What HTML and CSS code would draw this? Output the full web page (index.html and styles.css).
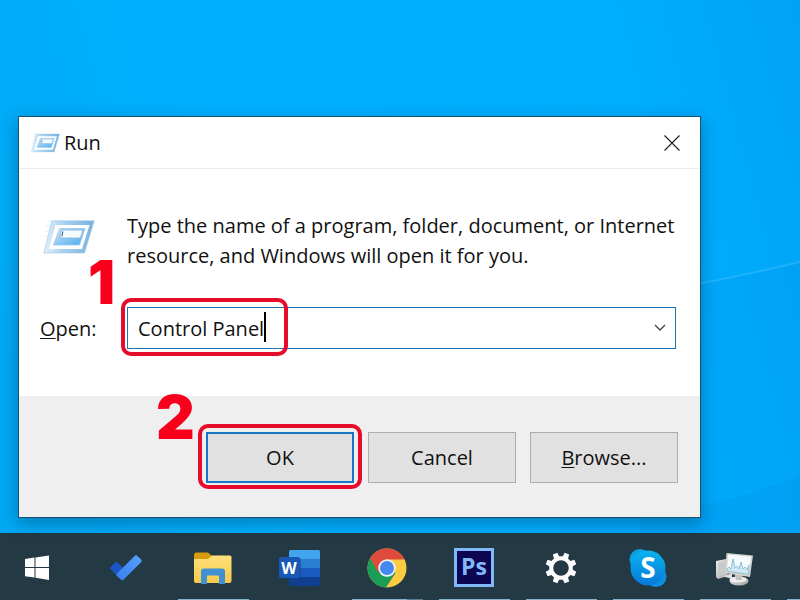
FILE: index.html
```html
<!DOCTYPE html>
<html lang="en">
<head>
<meta charset="utf-8">
<title>Run</title>
<link rel="stylesheet" href="styles.css">
</head>
<body>
<svg class="defs" aria-hidden="true">
  <defs>
    <linearGradient id="frame" x1="0" y1="0" x2="1" y2="0"><stop offset="0" stop-color="#e3f1fb"/><stop offset=".4" stop-color="#a5d1f0"/><stop offset="1" stop-color="#78b0de"/></linearGradient>
    <linearGradient id="pane" x1="0" y1="0" x2="1" y2="1"><stop offset="0" stop-color="#d4eafa"/><stop offset="1" stop-color="#4aa9ee"/></linearGradient>
    <linearGradient id="folder" x1="0" y1="0" x2="0" y2="1"><stop offset="0" stop-color="#ffe07a"/><stop offset="1" stop-color="#f8c94c"/></linearGradient>
    <linearGradient id="tick" x1="0" y1="1" x2="1" y2="0"><stop offset="0" stop-color="#3a7df0"/><stop offset="1" stop-color="#55a0fb"/></linearGradient>
    <linearGradient id="skype" x1="0" y1="0" x2="0" y2="1"><stop offset="0" stop-color="#08b4ef"/><stop offset="1" stop-color="#0878d8"/></linearGradient>
    <linearGradient id="metal" x1="0" y1="0" x2="1" y2="1"><stop offset="0" stop-color="#f1f1f1"/><stop offset="1" stop-color="#9d9d9d"/></linearGradient>
    <symbol id="run" viewBox="0 0 52 34">
      <path d="M4 1.500H12M3 6H9M2 11H7M1 16H6" stroke="#e0effa"/>
      <path d="M9 .8H51.200L41.500 33H.8Z" fill="url(#frame)" stroke="#9cc4e4" stroke-width=".6"/>
      <path d="M12.500 5H46.500L39 29H6Z" fill="#fff"/>
      <path d="M16.500 8.500H42L36.500 25H10.500Z" fill="url(#pane)" stroke="#9cc8ea" stroke-width=".8"/>
      <path d="M18.500 10H40L37.500 18H16.500Z" fill="#f4fafe" stroke="#7db0d8" stroke-width=".8"/>
      <path d="M20 11.500L18.800 16.500" stroke="#305a7c"/>
    </symbol>
  </defs>
</svg>
<div class="screen">
  <main class="desktop">
    <svg class="wallpaper" viewBox="0 0 800 533" preserveAspectRatio="none" aria-hidden="true">
      <path d="M560 305Q700 285 800 262V533H560Z" fill="#0090e8" opacity=".18"/>
      <path d="M560 308Q700 286 800 262" fill="none" stroke="#3cc0ff" stroke-width="2" opacity=".5"/>
      <path d="M640 520Q740 500 800 476V533H640Z" fill="#0080d8" opacity=".15"/>
    </svg>
    <section class="dialog" role="dialog" aria-labelledby="title">
      <header class="titlebar">
        <svg class="title-icon"><use href="#run"/></svg>
        <h1 id="title">Run</h1>
        <button class="close" aria-label="Close"><svg viewBox="0 0 16 16"><path d="M.5 .5L15.500 15.500M15.500 .5L.5 15.500" stroke="#222" stroke-width="1.200"/></svg></button>
      </header>
      <form class="form">
        <div class="content">
          <svg class="run-icon"><use href="#run"/></svg>
          <p>Type the name of a program, folder, document, or Internet resource, and Windows will open it for you.</p>
          <label for="open"><u>O</u>pen:</label>
          <div class="combo">
            <input id="open" type="text" value="Control Panel" autocomplete="off" spellcheck="false">
            <button class="drop" type="button" aria-label="Show history"><svg viewBox="0 0 12 8"><path d="M1 1L6 6L11 1" fill="none" stroke="#444" stroke-width="1.400"/></svg></button>
            <span class="caret"></span>
            <span class="mark mark-field"></span>
            <span class="step step-one">1</span>
          </div>
        </div>
        <footer class="actions">
          <div class="default">
            <button class="btn btn-default" type="button">OK</button>
            <span class="mark mark-button"></span>
            <span class="step step-two">2</span>
          </div>
          <button class="btn" type="button">Cancel</button>
          <button class="btn" type="button"><span><u>B</u>rowse...</span></button>
        </footer>
      </form>
    </section>
  </main>
  <nav class="taskbar" aria-label="Taskbar">
    <button class="task" aria-label="Start"><svg viewBox="0 0 40 40"><path d="M6 11L15.500 9.600V19H6ZM16.500 9.400L30 7.500V19H16.500ZM6 20H15.500V29.500L6 28.200ZM16.500 20H30V32L16.500 29.700Z" fill="#fff"/></svg></button>
    <button class="task" aria-label="To Do"><svg viewBox="0 0 40 40"><path d="M4.300 19.500L9.500 14.300Q10.500 13.400 11.500 14.300L19 21.800L12 28.500L4.300 21Q3.500 20.200 4.300 19.500Z" fill="#1b57c4"/><path d="M10.500 26L28.800 7.700Q30 6.600 31.200 7.700L35.300 11.800Q36.300 13 35.300 14L17.200 32.100Q16.300 33 15.300 32.100L10.500 27.500Q9.800 26.700 10.500 26Z" fill="url(#tick)"/></svg></button>
    <button class="task open" aria-label="File Explorer"><svg viewBox="0 0 40 40"><path d="M1 7Q1 4.500 3 4.500H15L19 8L16 12H1Z" fill="#d99a0b"/><path d="M1 11H15L19 7.500H37Q38.500 7.500 38.500 9V33Q38.500 35 36.500 35H3Q1 35 1 33Z" fill="url(#folder)"/><path d="M8 36V23.500Q8 20.500 11 20.500H29Q32 20.500 32 23.500V36H26V28.500Q26 27.500 25 27.500H15Q14 27.500 14 28.500V36Z" fill="#3f91d2"/></svg></button>
    <button class="task" aria-label="Word"><svg class="wide" viewBox="0 0 42 40"><path d="M10 3.500Q10 2 11.500 2H39.500Q41 2 41 3.500V11H10Z" fill="#41a5ee"/><path d="M10 11H41V20H10Z" fill="#2b7cd3"/><path d="M10 20H41V29H10Z" fill="#185abd"/><path d="M10 29H41V36.500Q41 38 39.500 38H11.500Q10 38 10 36.500Z" fill="#103f91"/><rect x="1" y="10" width="21" height="21" rx="2" fill="#123f85" opacity=".5"/><rect x="0" y="9" width="21" height="21" rx="2" fill="#1957b5"/><text class="word-letter" x="10" y="26" text-anchor="middle">W</text></svg></button>
    <button class="task open stacked" aria-label="Chrome"><svg viewBox="0 0 40 40"><circle cx="20" cy="20" r="19.500" fill="#fdcb41"/><path d="M20 20L3.100 10.300A19.500 19.500 0 0 0 19 39.500L28.500 25Z" fill="#1b9d58"/><path d="M3.100 10.300A19.500 19.500 0 0 1 37.500 11.500H20L11.500 24.700Z" fill="#de4b3c"/><circle cx="20" cy="20" r="8.700" fill="#f2f2f2"/><circle cx="20" cy="20" r="7" fill="#4688f1"/></svg></button>
    <button class="task open" aria-label="Photoshop"><svg viewBox="0 0 40 40"><rect x="1.500" y="1.500" width="37" height="36" fill="#0c0750" stroke="#80b8fa" stroke-width="3"/><text class="ps-letters" x="20" y="27" text-anchor="middle">Ps</text></svg></button>
    <button class="task open" aria-label="Settings"><svg viewBox="0 0 40 40"><g fill="#fff" transform="translate(20 20)"><path d="M-3 -10.500L-2.400 -15.500H2.400L3 -10.500ZM-3 10.500L-2.400 15.500H2.400L3 10.500Z" transform="rotate(22.500)"/><path d="M-3 -10.500L-2.400 -15.500H2.400L3 -10.500ZM-3 10.500L-2.400 15.500H2.400L3 10.500Z" transform="rotate(67.500)"/><path d="M-3 -10.500L-2.400 -15.500H2.400L3 -10.500ZM-3 10.500L-2.400 15.500H2.400L3 10.500Z" transform="rotate(112.500)"/><path d="M-3 -10.500L-2.400 -15.500H2.400L3 -10.500ZM-3 10.500L-2.400 15.500H2.400L3 10.500Z" transform="rotate(157.500)"/><circle r="9.800" fill="none" stroke="#fff" stroke-width="4"/></g></svg></button>
    <button class="task open" aria-label="Skype"><svg viewBox="0 0 40 40"><circle cx="12" cy="11.500" r="10.500" fill="#0b9fe3"/><circle cx="28" cy="28.500" r="10.500" fill="#0a91df"/><circle cx="20" cy="20" r="17.500" fill="url(#skype)"/><text class="skype-letter" x="20" y="30" text-anchor="middle">S</text></svg></button>
    <button class="task open" aria-label="Resource Monitor"><svg viewBox="0 0 40 40"><path d="M1 13L11 11L13 28L3 31L1 29Z" fill="url(#metal)"/><path d="M3 15L10 14L12 26L4 28Z" fill="#c9c9c9"/><path d="M12 27L17 25V31L7 28Z" fill="#ddd"/><ellipse cx="24" cy="33" rx="9.500" ry="4.500" fill="url(#metal)"/><ellipse cx="23" cy="31.500" rx="8.500" ry="3" fill="#eee"/><path d="M19 24H28L27 32H21Z" fill="#c4c4c4"/><path d="M11.500 5L38 7.500L35 29L10 25Z" fill="#d7d3cc"/><path d="M13 6.500L36 8.700L33.500 26.500L12 23Z" fill="#f5fafc"/><path d="M12 21L14 19L16 21L18 11L20 20L22 18L24 21L26 14L28 21L30 19L32 22L34 17L33.500 26.500L12 23Z" fill="#cfe8f2" stroke="#86bcd5" stroke-width=".9"/></svg></button>
    <button class="task open" aria-label="More windows"></button>
  </nav>
</div>
</body>
</html>
```
FILE: styles.css
```css
* { box-sizing: border-box; }
body {
  margin: 0;
  font-family: "Open Sans", "Noto Sans", sans-serif;
  font-size: 20px;
  color: #111;
}
button, input { font: inherit; color: inherit; }
button { padding: 0; border: 0; background: none; }
svg { display: block; }
u { text-underline-offset: 2px; text-decoration-thickness: 1px; }
.defs { position: absolute; width: 0; height: 0; }
.screen {
  display: flex;
  flex-direction: column;
  min-height: 100vh;
  overflow: hidden;
  background: linear-gradient(75deg, #00a8f2 0%, #00b0ff 35%, #00aefe 80%, #00a2f6 100%);
}
.desktop {
  position: relative;
  flex: 1;
  display: flex;
  flex-direction: column;
  justify-content: flex-end;
  padding: 0 99px 15px 18px;
}
.wallpaper {
  position: absolute;
  inset: 0;
  width: 100%;
  height: 100%;
}
.dialog {
  position: relative;
  border: 1px solid #17526f;
  background: #fff;
  box-shadow: 0 5px 16px rgba(0, 45, 80, .4);
}
.titlebar {
  display: flex;
  align-items: center;
  gap: 4px;
  height: 52px;
  padding: 0 20px 0 12px;
  border-bottom: 1px solid #ececec;
}
.title-icon { width: 29px; height: 20px; }
h1 { flex: 1; margin: 0; font-size: 20px; font-weight: 400; }
.close svg { width: 16px; height: 16px; }
.content {
  display: grid;
  grid-template-columns: 87px 1fr;
  row-gap: 36px;
  align-items: center;
  padding: 42px 24px 47px 21px;
}
.run-icon { width: 52px; height: 34px; margin: 0 3px 8px; }
p { margin: 0; line-height: 30px; }
.combo {
  position: relative;
  display: flex;
  height: 42px;
  border: 1px solid #1e74ad;
}
.combo input {
  flex: 1;
  min-width: 0;
  padding: 0 10px;
  border: 0;
  outline: 0;
  background: none;
}
.drop { display: grid; place-items: center; width: 30px; }
.drop svg { width: 12px; height: 8px; }
.caret {
  position: absolute;
  left: 136px;
  top: 4px;
  width: 2px;
  height: 30px;
  background: #000;
}
.mark {
  position: absolute;
  border: 4px solid #e60c2b;
  border-radius: 10px;
  pointer-events: none;
}
.mark-field { left: -7px; top: -10px; width: 167px; height: 58px; }
.mark-button { inset: -8px -8px -6px; }
.step {
  position: absolute;
  font-family: Inter, sans-serif;
  font-size: 60px;
  font-weight: 900;
  line-height: 60px;
  color: #f8001c;
}
.step-one { left: -40px; top: -56px; }
.step-two { left: -50px; top: -45px; }
.actions {
  display: flex;
  justify-content: flex-end;
  gap: 14px;
  padding: 36px 22px 34px;
  background: #efefef;
}
.default { position: relative; display: flex; }
.btn {
  width: 148px;
  height: 51px;
  border: 1px solid #adadad;
  background: #e1e1e1;
}
.btn-default { border: 2px solid #1976c4; }
.taskbar {
  display: flex;
  gap: 16px;
  height: 67px;
  padding-left: 4px;
  background: #233943;
}
.task {
  flex: 0 0 71px;
  display: grid;
  place-items: center;
  padding: 3px 2px 0 0;
  border-bottom: 1px solid transparent;
}
.task svg { width: 40px; height: 40px; }
.task svg.wide { width: 42px; }
.open { border-bottom-color: #83b5d2; }
.stacked { border-image: linear-gradient(90deg, #83b5d2 77%, #587e94 77%) 1; }
.word-letter, .ps-letters, .skype-letter { font-family: "Open Sans", sans-serif; font-weight: 700; fill: #fff; }
.word-letter { font-size: 16px; }
.ps-letters { font-size: 23px; fill: #80b8fa; }
.skype-letter { font-size: 28px; }
```
